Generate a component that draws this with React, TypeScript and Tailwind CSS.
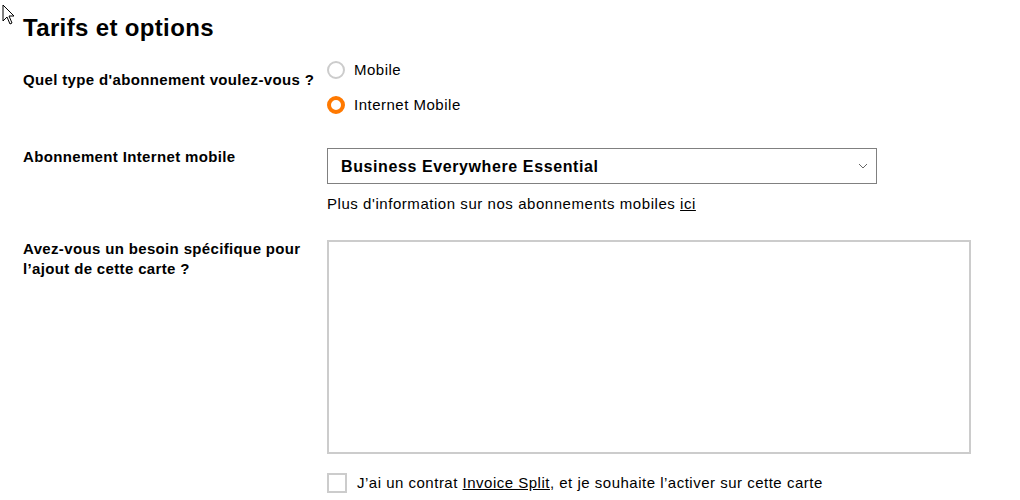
import React from "react";

function Cursor() {
  return (
    <svg width="14" height="22" viewBox="0 0 14 22" className="absolute left-[2px] top-[4px]">
      <path d="M1 1 L1 17 L5 13 L8 20 L10 19 L7 12 L12 12 Z" fill="#fff" stroke="#000" strokeWidth="1" strokeLinejoin="round" />
    </svg>
  );
}

export default function App() {
  return (
    <div className="relative w-[1020px] h-[500px] bg-white text-black overflow-hidden" style={{ fontFamily: '"Liberation Sans", Arial, sans-serif' }}>
      <Cursor />
      <div className="pl-[23px] pt-[14px]">
        <h1 className="text-[24px] leading-[28px] font-bold tracking-[0.35px]">Tarifs et options</h1>

        <div className="flex mt-[16px]">
          <div className="w-[304px] pt-[12px] text-[15px] leading-[20px] font-bold tracking-[0.35px]">Quel type d'abonnement voulez-vous ?</div>
          <div className="flex flex-col gap-[10px]">
            <label className="flex items-center h-[24px] gap-[9px] text-[15px] tracking-[0.5px]">
              <span className="w-[18px] h-[18px] rounded-full border-2 border-[#cccccc] bg-white" />
              <span>Mobile</span>
            </label>
            <label className="flex items-center h-[24px] gap-[9px] text-[15px] tracking-[0.5px] mt-[1px]">
              <span className="w-[18px] h-[18px] rounded-full border-[4px] border-[#ff7900] bg-white" />
              <span>Internet Mobile</span>
            </label>
          </div>
        </div>

        <div className="flex mt-[31px]">
          <div className="w-[304px] text-[15px] leading-[18px] font-bold tracking-[0.35px]">Abonnement Internet mobile</div>
          <div className="flex flex-col">
            <div className="w-[550px] h-[36px] border border-[#808080] flex items-center justify-between pl-[13px] pr-[8px]">
              <span className="text-[16px] font-bold tracking-[0.6px] mt-[1px]">Business Everywhere Essential</span>
              <svg width="10" height="6" viewBox="0 0 10 6">
                <path d="M1 1 L5 5 L9 1" fill="none" stroke="#666" strokeWidth="1" />
              </svg>
            </div>
            <div className="mt-[10px] text-[15px] leading-[20px] tracking-[0.55px]">
              Plus d'information sur nos abonnements mobiles <span className="underline">ici</span>
            </div>
          </div>
        </div>

        <div className="flex mt-[26px]">
          <div className="w-[304px] pr-[10px] text-[15px] leading-[20px] font-bold tracking-[0.35px] -mt-[1px]">Avez-vous un besoin spécifique pour l’ajout de cette carte ?</div>
          <div className="flex flex-col">
            <div className="w-[644px] h-[214px] border-2 border-[#cccccc] bg-white" />
            <div className="mt-[18px] flex items-center gap-[10px]">
              <span className="w-[20px] h-[20px] border-2 border-[#cccccc] bg-white" />
              <span className="text-[15px] leading-[20px] tracking-[0.5px] mt-[1px]">
                J’ai un contrat <span className="underline">Invoice Split</span>, et je souhaite l’activer sur cette carte
              </span>
            </div>
          </div>
        </div>
      </div>
    </div>
  );
}
